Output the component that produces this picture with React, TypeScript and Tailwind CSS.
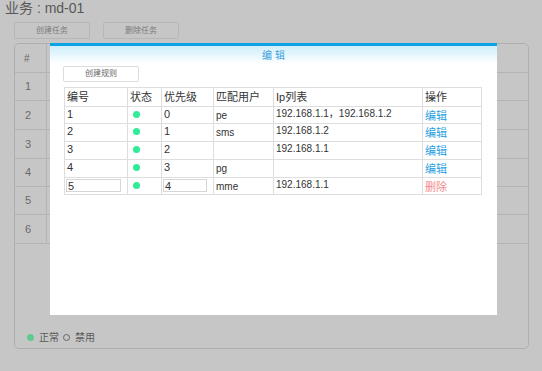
import React from "react";

const FONT = { fontFamily: '"Liberation Sans", "Noto Sans CJK SC", sans-serif' };

const panelRows = [28, 29, 29, 28, 28, 29];

type Rule = {
  id: string;
  pri: string;
  user: string;
  ip: string;
  op: "edit" | "del";
  input?: boolean;
  h: number;
};

const rules: Rule[] = [
  { id: "1", pri: "0", user: "pe", ip: "192.168.1.1，192.168.1.2", op: "edit", h: 17 },
  { id: "2", pri: "1", user: "sms", ip: "192.168.1.2", op: "edit", h: 18 },
  { id: "3", pri: "2", user: "", ip: "192.168.1.1", op: "edit", h: 18 },
  { id: "4", pri: "3", user: "pg", ip: "", op: "edit", h: 18 },
  { id: "5", pri: "4", user: "mme", ip: "192.168.1.1", op: "del", input: true, h: 17 },
];

function Cell({
  w,
  first,
  children,
  className = "",
}: {
  w?: string;
  first?: boolean;
  children?: React.ReactNode;
  className?: string;
}) {
  return (
    <div
      className={`${w ?? "flex-1"} ${first ? "" : "border-l border-[#dedede]"} h-full ${className}`}
    >
      {children}
    </div>
  );
}

export default function App() {
  return (
    <div
      className="relative w-[542px] h-[371px] overflow-hidden bg-[#c6c6c6]"
      style={FONT}
    >
      {/* page title */}
      <div className="pl-[5px] text-[14px] leading-[18px] text-[#585858] -mt-[1px]">
        业务 : md-01
      </div>

      {/* task buttons */}
      <div className="flex gap-[13px] ml-[14px] mt-[5px]">
        <div className="w-[76px] h-[17px] border border-[#b7b7b7] rounded-[2px] flex items-center justify-center text-[8px] text-[#7a7a7a]">
          创建任务
        </div>
        <div className="w-[76px] h-[17px] border border-[#b7b7b7] rounded-[2px] flex items-center justify-center text-[8px] text-[#7a7a7a]">
          删除任务
        </div>
      </div>

      {/* background panel */}
      <div className="ml-[14px] mt-[4px] w-[515px] h-[306px] border border-[#afafaf] rounded-[5px] flex flex-col">
        <div className="h-[29px] flex border-b border-[#b4b4b4]">
          <div className="w-[32px] border-r border-[#b4b4b4] pl-[9px] flex items-center text-[10px] text-[#6a6a6a]">
            #
          </div>
        </div>
        {panelRows.map((h, i) => (
          <div
            key={i}
            className="flex border-b border-[#b4b4b4]"
            style={{ height: h }}
          >
            <div className="w-[32px] border-r border-[#b4b4b4] pl-[10px] flex items-center text-[11px] text-[#6a6a6a]">
              {i + 1}
            </div>
          </div>
        ))}
        <div className="flex-1" />
        <div className="flex items-center h-[14px] mb-[4px] pl-[12px] text-[10px] text-[#5a5a5a]">
          <span className="w-[7px] h-[7px] rounded-full bg-[#5fcb8e]" />
          <span className="ml-[5px]">正常</span>
          <span className="ml-[4px] w-[7px] h-[7px] rounded-full border-[1.5px] border-[#666]" />
          <span className="ml-[5px]">禁用</span>
        </div>
      </div>

      {/* modal */}
      <div className="absolute left-[50px] top-[43px] w-[447px] h-[272px] bg-white flex flex-col">
        <div className="h-[3px] bg-[#0ba2e6]" />
        <div className="h-[18px] bg-gradient-to-b from-[#cfeefa] to-white flex items-center justify-center text-[10px] text-[#3b9fdc]">
          编 辑
        </div>
        <div className="ml-[13px] mt-[2px] w-[76px] h-[16px] border border-[#dcdcdc] rounded-[2px] flex items-center justify-center text-[8px] text-[#666]">
          创建规则
        </div>

        <div className="ml-[14px] mt-[5px] w-[418px] border border-[#dedede] text-[#333] text-[10px]">
          {/* header */}
          <div className="flex h-[18px] items-stretch text-[11px]">
            <Cell w="w-[62px]" first className="pl-[2px] flex items-center">编号</Cell>
            <Cell w="w-[34px]" className="pl-[2px] flex items-center">状态</Cell>
            <Cell w="w-[52px]" className="pl-[2px] flex items-center">优先级</Cell>
            <Cell w="w-[60px]" className="pl-[2px] flex items-center">匹配用户</Cell>
            <Cell w="w-[149px]" className="pl-[2px] flex items-center">Ip列表</Cell>
            <Cell className="pl-[2px] flex items-center">操作</Cell>
          </div>
          {rules.map((r) => (
            <div
              key={r.id}
              className="flex border-t border-[#dedede] leading-[14px]"
              style={{ height: r.h }}
            >
              <Cell w="w-[62px]" first className="pl-[1px]">
                {r.input ? (
                  <div className="mt-[1px] w-[55px] h-[13px] border border-[#d6d6d6] pl-[1px] leading-[12px] text-[11px]">
                    {r.id}
                  </div>
                ) : (
                  <span className="pl-[1px] text-[11px]">{r.id}</span>
                )}
              </Cell>
              <Cell w="w-[34px]" className="pl-[5px] pt-[4px]">
                <div className="w-[7px] h-[7px] rounded-full bg-[#30ec97]" />
              </Cell>
              <Cell w="w-[52px]" className="pl-[1px]">
                {r.input ? (
                  <div className="mt-[1px] w-[44px] h-[13px] border border-[#d6d6d6] pl-[1px] leading-[12px] text-[11px]">
                    {r.pri}
                  </div>
                ) : (
                  <span className="pl-[1px] text-[11px]">{r.pri}</span>
                )}
              </Cell>
              <Cell w="w-[60px]" className="pl-[2px] pt-[2px]">
                {r.user}
              </Cell>
              <Cell w="w-[149px]" className="pl-[2px] whitespace-nowrap">
                {r.ip}
              </Cell>
              <Cell className="pl-[2px] pt-[2px] text-[11px]">
                {r.op === "edit" ? (
                  <span className="text-[#2a9fe2]">编辑</span>
                ) : (
                  <span className="text-[#f48a8a]">删除</span>
                )}
              </Cell>
            </div>
          ))}
        </div>
      </div>
    </div>
  );
}
